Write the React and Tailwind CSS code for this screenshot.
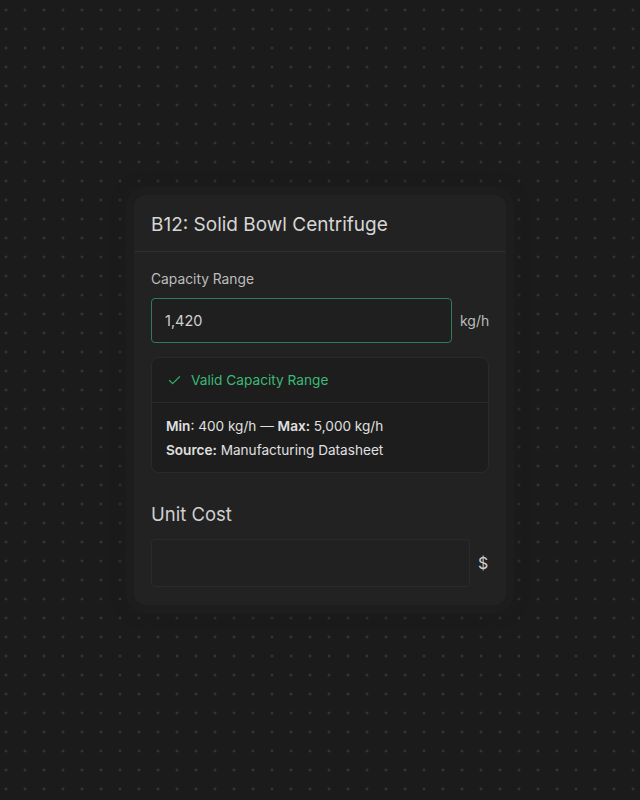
import React from 'react';
import { Check } from 'lucide-react';

const App = () => {
  return (
    <div
      className="min-h-screen w-full flex items-center justify-center bg-[#1b1b1b] bg-[radial-gradient(circle,#3b3b3b_1px,transparent_1.4px)] bg-[size:19px_19px] bg-[position:-3.5px_0.5px]"
      style={{ fontFamily: 'Inter, "Liberation Sans", sans-serif' }}
    >
      <div className="w-[372px] rounded-xl bg-[#222222] shadow-[0_0_0_8px_#1d1d1d,0_0_14px_8px_#1c1c1c]">
        {/* Header */}
        <div className="h-[57px] flex items-center pt-[3px] px-[17px] border-b border-[#2e2e2e]">
          <h2 className="text-[19px] leading-7 text-[#d6d6d6]">B12: Solid Bowl Centrifuge</h2>
        </div>

        <div className="px-[17px] pt-[17px] pb-[18px]">
          {/* Capacity */}
          <label className="block text-[13.8px] leading-5 text-[#bdbdbd] mb-[9px]">Capacity Range</label>
          <div className="flex items-center gap-2">
            <div className="flex-1 h-[45px] rounded-[4px] border border-[#2f7c57] bg-[#1f1f1f] flex items-center px-[13px]">
              <span className="text-[14.5px] text-[#d0d0d0]">1,420</span>
            </div>
            <span className="text-[14px] text-[#bdbdbd] w-[29px]">kg/h</span>
          </div>

          {/* Validation */}
          <div className="mt-[14px] rounded-lg border border-[#2a2a2a] bg-[#1d1d1d]">
            <div className="h-[45px] flex items-center gap-[9px] px-[15px] border-b border-[#2c2c2c]">
              <Check className="w-[15px] h-[15px] text-[#34a86a]" strokeWidth={2} />
              <span className="text-[13.7px] text-[#3bb975]">Valid Capacity Range</span>
            </div>
            <div className="px-[14px] pt-[11px] pb-[10px] text-[13.6px] leading-6 text-[#e0e0e0]">
              <div>
                <span className="font-semibold">Min</span>: 400 kg/h — <span className="font-semibold">Max:</span> 5,000 kg/h
              </div>
              <div>
                <span className="font-semibold">Source:</span> Manufacturing Datasheet
              </div>
            </div>
          </div>

          {/* Unit cost */}
          <label className="block mt-[27px] text-[18.5px] leading-7 text-[#d0d0d0] mb-[11px]">Unit Cost</label>
          <div className="flex items-center gap-2">
            <div className="flex-1 h-[48px] rounded-[4px] border border-[#2b2b2b] bg-[#212121]" />
            <span className="text-[16px] text-[#cfcfcf] w-[11px]">$</span>
          </div>
        </div>
      </div>
    </div>
  );
};

export default App;
